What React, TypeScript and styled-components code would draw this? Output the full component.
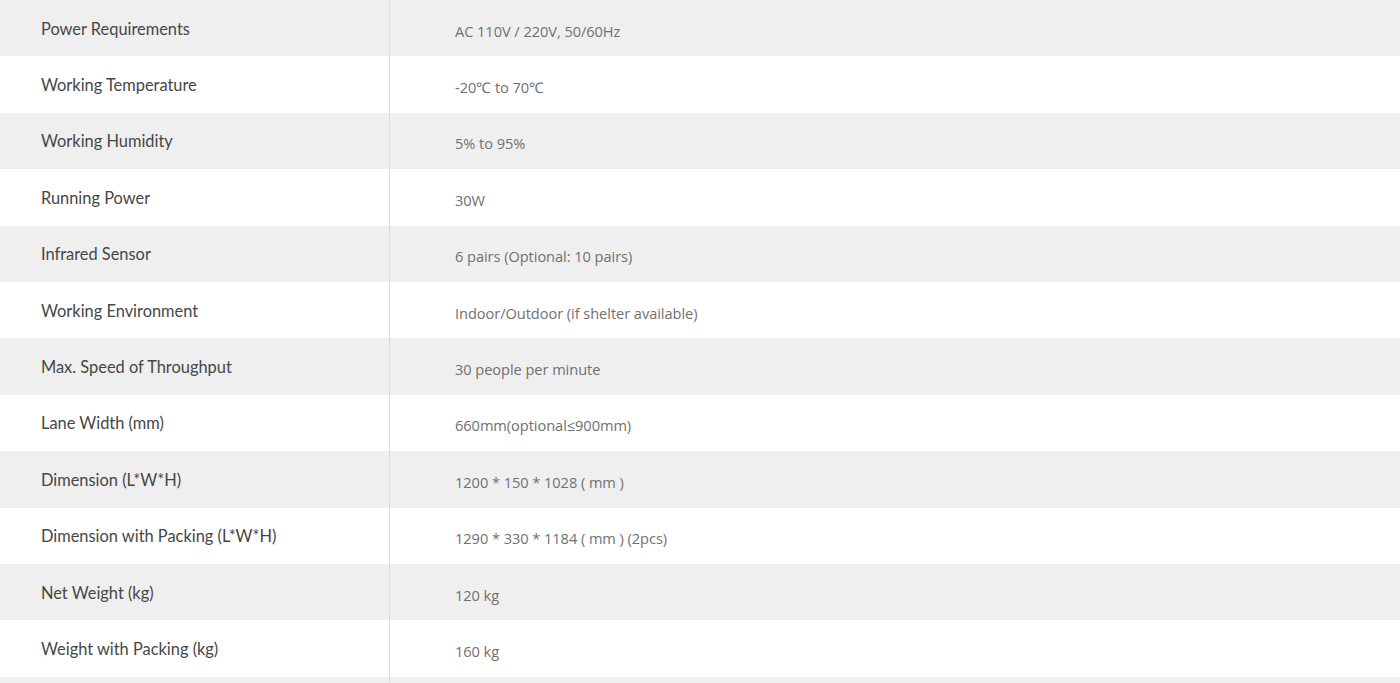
import React from "react";
import styled, { createGlobalStyle } from "styled-components";

const Global = createGlobalStyle`
  html, body { margin: 0; padding: 0; background: #fff; }
  body { font-family: "Lato", "Open Sans", sans-serif; }
`;

const Table = styled.div`
  display: flex;
  flex-direction: column;
  width: 1400px;
`;

const Row = styled.div<{ $shade: boolean }>`
  display: grid;
  grid-template-columns: 390px 1fr;
  height: 56.4px;
  background: ${(p) => (p.$shade ? "#efefef" : "#ffffff")};
`;

const Label = styled.div`
  display: flex;
  align-items: center;
  padding-left: 41px;
  border-right: 1px solid #dcdcdc;
  font-family: "Lato", sans-serif;
  font-size: 16.4px;
  color: #464646;
`;

const Value = styled.div`
  display: flex;
  align-items: center;
  padding-left: 65px;
  padding-top: 5px;
  font-family: "Open Sans", sans-serif;
  font-size: 14.6px;
  color: #707070;
  letter-spacing: -0.05px;
`;

const rows: [string, string][] = [
  ["Power Requirements", "AC 110V / 220V, 50/60Hz"],
  ["Working Temperature", "-20℃ to 70℃"],
  ["Working Humidity", "5% to 95%"],
  ["Running Power", "30W"],
  ["Infrared Sensor", "6 pairs (Optional: 10 pairs)"],
  ["Working Environment", "Indoor/Outdoor (if shelter available)"],
  ["Max. Speed of Throughput", "30 people per minute"],
  ["Lane Width (mm)", "660mm(optional≤900mm)"],
  ["Dimension (L*W*H)", "1200 * 150 * 1028 ( mm )"],
  ["Dimension with Packing (L*W*H)", "1290 * 330 * 1184 ( mm ) (2pcs)"],
  ["Net Weight (kg)", "120 kg"],
  ["Weight with Packing (kg)", "160 kg"],
  ["", ""],
];

export default function App() {
  return (
    <>
      <Global />
      <Table>
        {rows.map(([l, v], i) => (
          <Row key={i} $shade={i % 2 === 0}>
            <Label>{l}</Label>
            <Value>{v}</Value>
          </Row>
        ))}
      </Table>
    </>
  );
}
